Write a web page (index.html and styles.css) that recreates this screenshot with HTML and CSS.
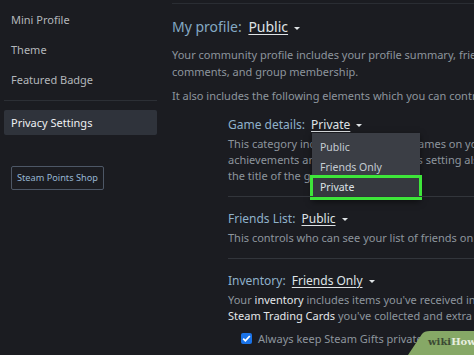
FILE: index.html
```html
<!DOCTYPE html>
<html lang="en">
<head>
    <meta charset="UTF-8">
    <meta name="viewport" content="width=device-width, initial-scale=1.0">
    <title>Privacy Settings</title>
    <link rel="stylesheet" href="styles.css">
</head>
<body>
    <div class="page">
        <div class="sidebar">
            <div class="nav-item">Mini Profile</div>
            <div class="nav-item">Theme</div>
            <div class="nav-item">Featured Badge</div>
            <div class="nav-sep"></div>
            <div class="nav-item active">Privacy Settings</div>
            <div class="shop-btn">Steam Points Shop</div>
        </div>

        <div class="content">
            <div class="top-line"></div>
            <h2 class="main-label">My profile: <span class="value">Public</span><span class="caret"></span></h2>
            <p class="desc">Your community profile includes your profile summary, friends list, badges, Steam Level, showcases,<br>comments, and group membership.</p>
            <p class="desc gap">It also includes the following elements which you can control separately:</p>

            <div class="sub">
                <div class="sub-label">Game details: <span class="value">Private</span><span class="caret"></span></div>
                <p class="sub-desc">This category includes the list of all games on your Steam account, games you've wishlisted, your<br>achievements and your playtime. This setting also controls whether you're seen as "in-game" and<br>the title of the game you are playing.</p>

                <div class="menu">
                    <div class="menu-item">Public</div>
                    <div class="menu-item">Friends Only</div>
                    <div class="menu-item picked">Private</div>
                </div>
            </div>

            <div class="sub sep">
                <div class="sub-label">Friends List: <span class="value">Public</span><span class="caret"></span></div>
                <p class="sub-desc">This controls who can see your list of friends on your Steam Community profile.</p>
            </div>

            <div class="sub sep">
                <div class="sub-label">Inventory: <span class="value">Friends Only</span><span class="caret"></span></div>
                <p class="sub-desc">Your <b>inventory</b> includes items you've received in games that use Steam Trading. It also includes any<br><b>Steam Trading Cards</b> you've collected and extra copies or Steam Gifts.</p>
                <div class="check-row">
                    <span class="check">
                        <svg width="11" height="11" viewBox="0 0 11 11"><path d="M2.2 5.6l2.2 2.2 4.4-4.8" fill="none" stroke="#fff" stroke-width="1.8"/></svg>
                    </span>
                    Always keep Steam Gifts private even if users can see my inventory.
                </div>
            </div>
        </div>
    </div>

    <div class="wm">
        <svg width="66" height="24" viewBox="0 0 66 24"><path d="M14 3 Q16 0 22 0 L66 0 L66 24 L0 24 Z" fill="#86a866"/></svg>
        <span class="wm-text"><span class="wiki">wiki</span>How</span>
    </div>
</body>
</html>
```

FILE: styles.css
```css
body {
    margin: 0;
    background-color: #1b1c21;
    font-family: "Noto Sans", "Open Sans", sans-serif;
    overflow: hidden;
}
.page {
    display: flex;
    height: 355px;
    overflow: hidden;
}
.sidebar {
    flex: 0 0 153px;
    padding: 5px 3px 0 4px;
}
.nav-item {
    height: 30px;
    line-height: 30px;
    padding-left: 7px;
    font-size: 11px;
    color: #b3b7bb;
}
.nav-sep {
    height: 1px;
    margin: 5px 0 9px;
    background-color: #2c2f35;
}
.nav-item.active {
    height: 25px;
    line-height: 25px;
    background-color: #2f333b;
    color: #eef0f2;
    border-radius: 2px;
}
.shop-btn {
    display: inline-block;
    margin: 31px 0 0 7px;
    padding: 0 5px;
    height: 22px;
    line-height: 22px;
    border: 1px solid #4d5766;
    border-radius: 2px;
    font-size: 9.2px;
    color: #97b6d3;
}
.content {
    position: relative;
    flex: 1;
    min-width: 0;
    padding-left: 12px;
    white-space: nowrap;
}
.top-line {
    height: 1px;
    margin-top: 3px;
    background-color: #2a2d33;
}
.main-label {
    margin: 13px 0 0;
    height: 20px;
    line-height: 20px;
    font-size: 14px;
    font-weight: normal;
    color: #84a9c4;
}
.value {
    margin-left: 3px;
    color: #dfe3e6;
    text-decoration: underline;
    text-decoration-thickness: 1px;
    text-underline-offset: 2px;
}
.caret {
    display: inline-block;
    margin-left: 6px;
    vertical-align: middle;
    border-left: 3px solid transparent;
    border-right: 3px solid transparent;
    border-top: 3px solid #dfe3e6;
}
.desc {
    margin: 9px 0 0;
    font-size: 11px;
    line-height: 17px;
    color: #8d959d;
}
.desc.gap {
    margin-top: 7px;
}
.sub {
    position: relative;
    margin-left: 56px;
    padding-top: 12px;
}
.sub.sep {
    margin-top: 12px;
    border-top: 1px solid #32353b;
    padding-top: 13px;
}
.sub-label {
    height: 18px;
    line-height: 18px;
    font-size: 12px;
    color: #8fb1ca;
}
.sub-desc {
    margin: 2px 0 0;
    font-size: 11px;
    line-height: 16px;
    color: #8d959d;
}
.sub-desc b {
    font-weight: normal;
    color: #e4e7ea;
}
.menu {
    position: absolute;
    left: 84px;
    top: 29px;
    width: 108px;
    padding-top: 4px;
    background-color: #3b3e45;
    box-shadow: 0 2px 6px rgba(0,0,0,0.5);
}
.menu-item {
    height: 20px;
    line-height: 20px;
    padding-left: 8px;
    font-size: 10.5px;
    color: #c5ccd2;
}
.menu-item.picked {
    margin: -2px -2px 0 -2px;
    padding-left: 7px;
    height: 19px;
    line-height: 19px;
    border: 3px solid #3ee63a;
    background-color: #36393f;
    color: #dfe3e6;
}
.check-row {
    margin: 7px 0 0 13px;
    font-size: 11px;
    color: #8d959d;
    display: flex;
    align-items: center;
    gap: 6px;
}
.check {
    display: inline-block;
    width: 11px;
    height: 11px;
    background-color: #1a73e8;
    border-radius: 2px;
}
.check svg {
    display: block;
}
.wm {
    position: absolute;
    right: 0;
    bottom: 0;
    width: 66px;
    height: 24px;
}
.wm svg {
    position: absolute;
    left: 0;
    top: 0;
}
.wm-text {
    position: absolute;
    left: 20px;
    top: 5px;
    font-family: "DejaVu Serif", serif;
    font-weight: bold;
    font-size: 10px;
    color: #e8efe0;
}
.wiki {
    color: #3c4a34;
}
```
